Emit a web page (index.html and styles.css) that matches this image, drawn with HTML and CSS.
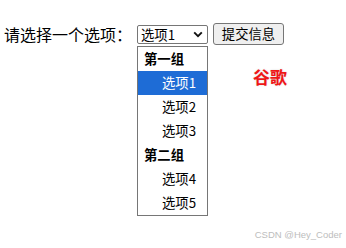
FILE: index.html
```html
<!DOCTYPE html>
<html lang="zh">
<head>
<meta charset="utf-8">
<link rel="stylesheet" href="styles.css">
</head>
<body>
<div class="page">
  <form class="form-row">
    <span class="label">请选择一个选项：</span>
    <div class="select-wrap">
      <div class="select">
        <span class="select-value">选项1</span>
        <svg class="chev" width="10" height="7" viewBox="0 0 10 7"><path d="M1.2 1.4 L5 5.2 L8.8 1.4" fill="none" stroke="#111" stroke-width="1.9"/></svg>
      </div>
      <div class="dropdown">
        <div class="group">第一组</div>
        <div class="option selected">选项1</div>
        <div class="option">选项2</div>
        <div class="option">选项3</div>
        <div class="group">第二组</div>
        <div class="option">选项4</div>
        <div class="option">选项5</div>
      </div>
    </div>
    <button type="button" class="btn">提交信息</button>
  </form>
  <div class="result">谷歌</div>
</div>
<div class="watermark">CSDN @Hey_Coder</div>
</body>
</html>
```
FILE: styles.css
```css
html, body {
  margin: 0;
  padding: 0;
  background: #fff;
}
body {
  width: 346px;
  height: 248px;
  position: relative;
  overflow: hidden;
  font-family: "Noto Sans CJK SC", "Noto Sans", sans-serif;
  color: #000;
}
.page {
  padding: 23px 0 0 4px;
}
.form-row {
  display: flex;
  align-items: center;
  margin: 0;
  height: 22px;
}
.label {
  font-size: 16px;
  line-height: 20px;
  width: 133px;
  white-space: nowrap;
}
.select-wrap {
  position: relative;
  width: 71px;
  height: 19px;
}
.select {
  box-sizing: border-box;
  width: 71px;
  height: 19px;
  border: 1px solid #767676;
  border-radius: 2px;
  background: #fff;
  display: flex;
  align-items: center;
  justify-content: space-between;
  padding: 0 4px 0 3px;
}
.select-value {
  font-size: 13.33px;
  line-height: 17px;
}
.chev {
  display: block;
}
.dropdown {
  position: absolute;
  left: 0;
  top: 21px;
  box-sizing: border-box;
  width: 71px;
  border: 1px solid #767676;
  background: #fff;
  z-index: 2;
}
.group, .option {
  height: 24px;
  line-height: 24px;
  font-size: 13.33px;
  white-space: nowrap;
}
.group {
  font-weight: bold;
  padding-left: 6px;
}
.option {
  padding-left: 24px;
}
.option.selected {
  background: #1e6cd6;
  color: #fff;
}
.btn {
  margin-left: 5px;
  box-sizing: border-box;
  width: 71px;
  height: 22px;
  padding: 0;
  border: 1px solid #767676;
  border-radius: 3px;
  background: #efefef;
  font-family: "Noto Sans CJK SC", "Noto Sans", sans-serif;
  font-size: 13.33px;
  line-height: 18px;
  color: #000;
}
.result {
  margin: 22px 0 0 249px;
  font-size: 17px;
  line-height: 20px;
  font-weight: bold;
  color: #f01616;
  text-shadow: 0 0 2px #d8d8d8;
}
.watermark {
  position: absolute;
  right: 4px;
  bottom: 8px;
  font-family: "Liberation Sans", sans-serif;
  font-size: 9.5px;
  color: #bdbdbd;
}
```
